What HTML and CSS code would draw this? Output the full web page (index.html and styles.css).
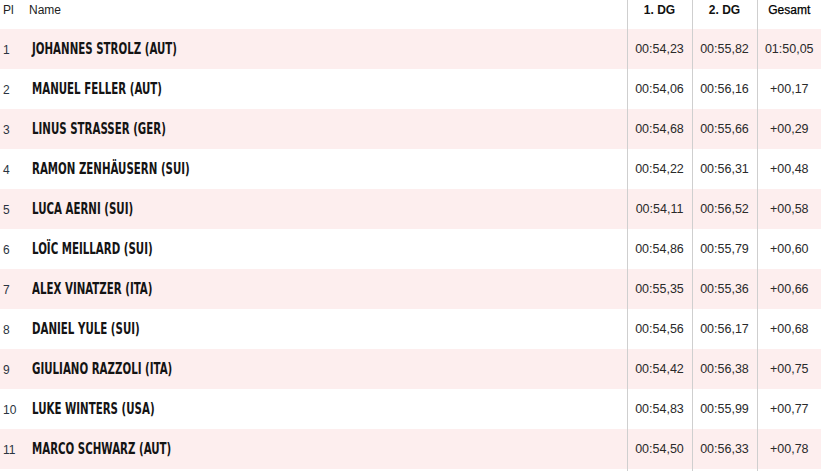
FILE: index.html
```html
<!DOCTYPE html>
<html lang="de">
<head>
<meta charset="utf-8">
<title>Ergebnis</title>
<link rel="stylesheet" href="styles.css">
</head>
<body>
<table class="results">
  <colgroup>
    <col class="c-pl"><col class="c-name"><col class="c-time"><col class="c-time"><col class="c-total">
  </colgroup>
  <thead>
    <tr>
      <th class="pl">Pl</th>
      <th class="name">Name</th>
      <th class="time bold">1. DG</th>
      <th class="time bold">2. DG</th>
      <th class="time semi">Gesamt</th>
    </tr>
  </thead>
  <tbody>
    <tr class="odd"><td class="pl">1</td><td class="name"><span>JOHANNES STROLZ (AUT)</span></td><td class="time">00:54,23</td><td class="time">00:55,82</td><td class="time">01:50,05</td></tr>
    <tr><td class="pl">2</td><td class="name"><span>MANUEL FELLER (AUT)</span></td><td class="time">00:54,06</td><td class="time">00:56,16</td><td class="time">+00,17</td></tr>
    <tr class="odd"><td class="pl">3</td><td class="name"><span>LINUS STRASSER (GER)</span></td><td class="time">00:54,68</td><td class="time">00:55,66</td><td class="time">+00,29</td></tr>
    <tr><td class="pl">4</td><td class="name"><span>RAMON ZENHÄUSERN (SUI)</span></td><td class="time">00:54,22</td><td class="time">00:56,31</td><td class="time">+00,48</td></tr>
    <tr class="odd"><td class="pl">5</td><td class="name"><span>LUCA AERNI (SUI)</span></td><td class="time">00:54,11</td><td class="time">00:56,52</td><td class="time">+00,58</td></tr>
    <tr><td class="pl">6</td><td class="name"><span>LOÏC MEILLARD (SUI)</span></td><td class="time">00:54,86</td><td class="time">00:55,79</td><td class="time">+00,60</td></tr>
    <tr class="odd"><td class="pl">7</td><td class="name"><span>ALEX VINATZER (ITA)</span></td><td class="time">00:55,35</td><td class="time">00:55,36</td><td class="time">+00,66</td></tr>
    <tr><td class="pl">8</td><td class="name"><span>DANIEL YULE (SUI)</span></td><td class="time">00:54,56</td><td class="time">00:56,17</td><td class="time">+00,68</td></tr>
    <tr class="odd"><td class="pl">9</td><td class="name"><span>GIULIANO RAZZOLI (ITA)</span></td><td class="time">00:54,42</td><td class="time">00:56,38</td><td class="time">+00,75</td></tr>
    <tr><td class="pl">10</td><td class="name"><span>LUKE WINTERS (USA)</span></td><td class="time">00:54,83</td><td class="time">00:55,99</td><td class="time">+00,77</td></tr>
    <tr class="odd"><td class="pl">11</td><td class="name"><span>MARCO SCHWARZ (AUT)</span></td><td class="time">00:54,50</td><td class="time">00:56,33</td><td class="time">+00,78</td></tr>
    <tr class="last"><td class="pl"></td><td class="name"></td><td class="time"></td><td class="time"></td><td class="time"></td></tr>
  </tbody>
</table>
</body>
</html>
```
FILE: styles.css
```css
html, body {
  margin: 0;
  padding: 0;
  background: #fff;
  overflow: hidden;
}
body {
  width: 821px;
  height: 471px;
  font-family: "Liberation Sans", Arial, sans-serif;
  color: #222;
}
.results {
  border-collapse: collapse;
  table-layout: fixed;
  width: 821px;
}
.c-pl { width: 28px; }
.c-name { width: 599px; }
.c-time { width: 65px; }
.c-total { width: 64px; }

.results thead tr { height: 29px; }
.results th {
  padding: 3px 0 0 0;
  font-size: 12px;
  line-height: 14px;
  font-weight: normal;
  color: #222;
  vertical-align: top;
  text-align: left;
}
.results th.pl { padding-left: 3px; }
.results th.name { padding-left: 1px; }
.results th.time { text-align: center; color: #111; }
.results th.bold { font-weight: bold; }
.results th.semi { color: #000; -webkit-text-stroke: 0.25px #000; }

.results tbody tr { height: 40px; }
.results tbody tr.last { height: 3px; }
.results td {
  padding: 0;
  line-height: 16px;
  vertical-align: middle;
}
.results tr.odd td { background: #fdeeee; }
.results td.pl {
  font-size: 12px;
  padding-left: 3px;
  padding-top: 1px;
  color: #2a3340;
}
.results td.name {
  padding-left: 4px;
  font-family: "DejaVu Sans Condensed", "Liberation Sans", sans-serif;
  font-weight: bold;
  font-size: 15px;
  color: #141414;
  white-space: nowrap;
}
.results td.name span {
  display: inline-block;
  transform: scaleX(0.76);
  transform-origin: left center;
}
.results td.time {
  text-align: center;
  font-size: 12.5px;
  color: #2a2a2a;
}
.results .time {
  border-left: 1px solid #cfcfcf;
}
```
